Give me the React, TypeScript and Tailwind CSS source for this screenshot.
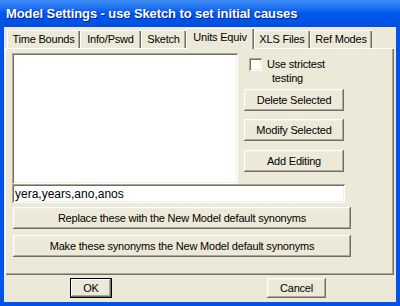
const raised =
  "bg-[#ECE9D8] shadow-[inset_-1px_-1px_#716F64,inset_1px_1px_#ffffff,inset_-2px_-2px_#ACA899,inset_2px_2px_#F1EFE2]";
const sunken =
  "bg-white shadow-[inset_1px_1px_#ACA899,inset_-1px_-1px_#ffffff,inset_2px_2px_#716F64,inset_-2px_-2px_#F1EFE2]";

function Button({ label, className }: { label: string; className: string }) {
  return (
    <button className={`flex items-center justify-center text-black ${raised} ${className}`}>
      {label}
    </button>
  );
}

const tabs = [
  { label: "Time Bounds", w: "w-[73px]" },
  { label: "Info/Pswd", w: "w-[61px]" },
  { label: "Sketch", w: "w-[45px]" },
  { label: "Units Equiv", w: "w-[68px]", active: true },
  { label: "XLS Files", w: "w-[56px]" },
  { label: "Ref Modes", w: "w-[62px]" },
];

export default function App() {
  return (
    <div className="flex h-[306px] w-[400px] flex-col bg-[#0053E8] font-['Liberation_Sans',sans-serif] text-[11px] tracking-[-0.2px] text-black">
      <div className="flex h-[27px] shrink-0 items-center bg-gradient-to-b from-[#3E8DF5] via-[#0058EE] to-[#0050E0] pl-[6px] text-[13px] font-bold tracking-[-0.1px] text-white [text-shadow:1px_1px_#0A1E8C]">
        Model Settings - use Sketch to set initial causes
      </div>
      <div className="mx-[4px] mb-[4px] flex flex-1 flex-col bg-[#ECE9D8] pt-[1px]">
        {/* tab strip */}
        <div className="flex h-[20px] items-end pl-[3px]">
          {tabs.map((t) =>
            t.active ? (
              <div
                key={t.label}
                className={`relative z-10 -mb-px flex h-[21px] items-center justify-center bg-[#ECE9D8] pb-[2px] shadow-[inset_1px_1px_#ffffff,inset_-1px_0_#716F64,inset_-2px_0_#ACA899] ${t.w}`}
              >
                {t.label}
              </div>
            ) : (
              <div
                key={t.label}
                className={`flex h-[18px] items-center justify-center pt-[1px] shadow-[inset_1px_1px_#ffffff,inset_-1px_0_#716F64,inset_-2px_0_#ACA899] ${t.w}`}
              >
                {t.label}
              </div>
            )
          )}
        </div>
        {/* panel */}
        <div className="ml-px mr-[2px] flex h-[227px] flex-col pl-[7px] pt-[5px] shadow-[inset_1px_1px_#ffffff,inset_-1px_-1px_#716F64,inset_-2px_-2px_#ACA899]">
          <div className="flex">
            <div className={`h-[131px] w-[226px] ${sunken}`} />
            <div className="ml-[6px] flex flex-col">
              <label className="ml-[5px] mt-[4px] flex items-start gap-[5px]">
                <span className={`mt-px h-[13px] w-[13px] shrink-0 ${sunken}`} />
                <span className="leading-[14px]">
                  Use strictest
                  <br />
                  <span className="pl-[5px]">testing</span>
                </span>
              </label>
              <Button label="Delete Selected" className="mt-[4px] h-[22px] w-[100px]" />
              <Button label="Modify Selected" className="mt-[8px] h-[22px] w-[100px]" />
              <Button label="Add Editing" className="mt-[9px] h-[22px] w-[100px]" />
            </div>
          </div>
          <div className={`flex h-[19px] w-[333px] items-center pl-[3px] text-[12px] tracking-normal ${sunken}`}>
            yera,years,ano,anos
          </div>
          <Button
            label="Replace these with the New Model default synonyms"
            className="ml-px mt-[4px] h-[22px] w-[338px]"
          />
          <Button
            label="Make these synonyms the New Model default synonyms"
            className="ml-px mt-[6px] h-[22px] w-[338px]"
          />
        </div>
        {/* footer */}
        <div className="mt-[3px] flex">
          <button className="ml-[66px] flex h-[20px] w-[42px] items-center justify-center border border-black bg-[#ECE9D8] shadow-[inset_-1px_-1px_#716F64,inset_1px_1px_#ffffff,inset_-2px_-2px_#ACA899]">
            OK
          </button>
          <Button label="Cancel" className="ml-[155px] h-[20px] w-[59px]" />
        </div>
      </div>
    </div>
  );
}
